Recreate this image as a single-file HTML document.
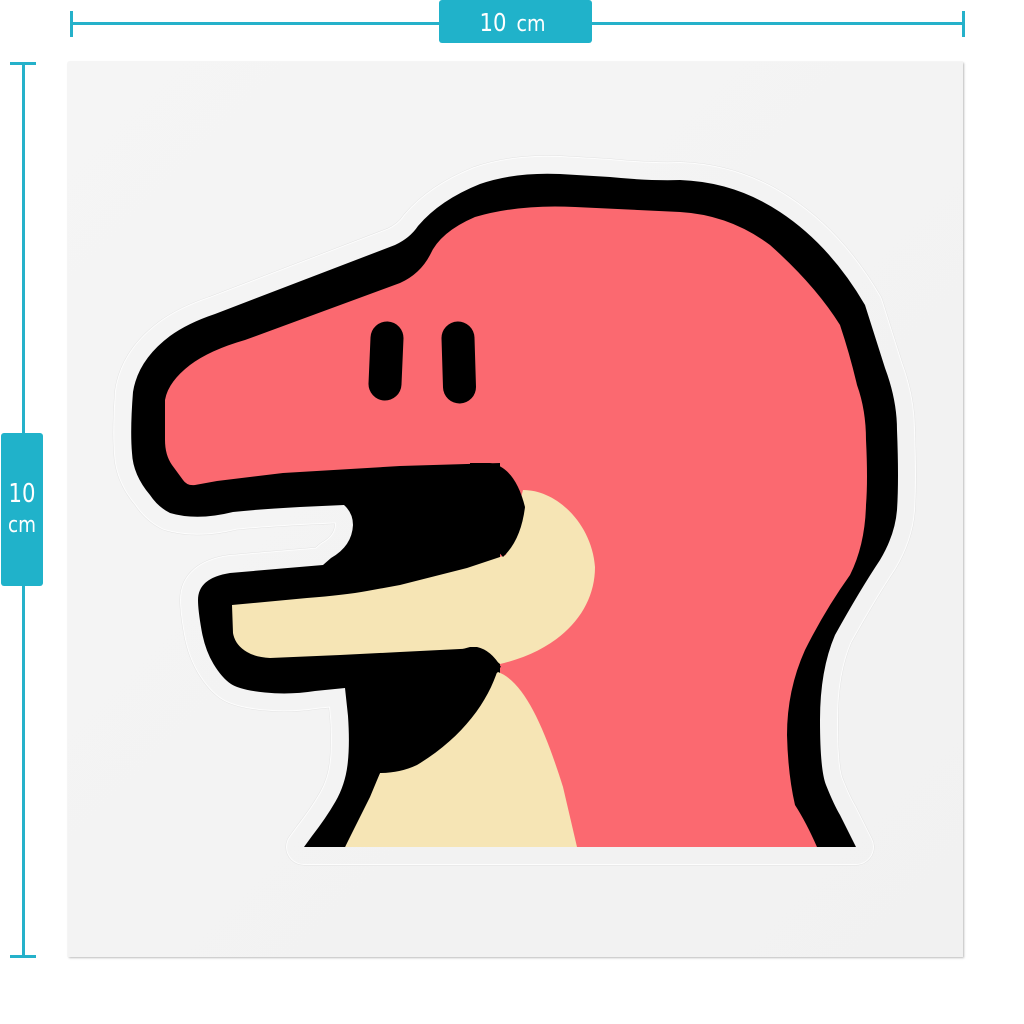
<!DOCTYPE html>
<html>
<head>
<meta charset="utf-8">
<style>
html,body{margin:0;padding:0;background:#fff;width:1024px;height:1024px;overflow:hidden}
svg{display:block;position:absolute;left:0;top:0}
#paper{position:absolute;left:68px;top:62px;width:895px;height:895px;background:#f3f3f3;box-shadow:1px 1px 2px #bdbdbd,0 0 1px #e4e4e4}
</style>
</head>
<body>
<div id="paper"></div>
<svg width="1024" height="1024" viewBox="0 0 1024 1024" xmlns="http://www.w3.org/2000/svg">
<defs>
<linearGradient id="g" gradientUnits="userSpaceOnUse" x1="68" y1="62" x2="963" y2="957">
<stop offset="0" stop-color="#f5f5f5"/>
<stop offset="1" stop-color="#f1f1f1"/>
</linearGradient>
<path id="sil" d="M304 847 L312 836 Q326 818 335.500 801.500 Q345 785 347.500 765 Q350 745 348 716 L345 688 L315 691 Q290 695 265 692.500 Q240 690 231 684 Q222 678 213.500 664 Q205 650 201.500 630 Q198 610 198 600 Q198 578 230 573 L323 565 L331 558 Q352 546 353 525 Q353 513 344 505 L300 507 Q262 509 233 512 Q197 521 170 513 Q158 507 150 495 Q133 475 132 453 Q130 430 133 392 Q138 360 170 336 Q188 323 215 314 L395 245 Q410 238 418 226 Q440 200 480 184 Q515 172 560 174 L610 177 Q650 181 680 180 Q735 182 780 212 Q830 245 865 305 L885 368 Q897 400 897 430 Q899 480 897 510 Q895 535 880 560 Q860 590 835 635 Q820 670 820 720 Q820 770 826 785 Q834 805 840 815 L856 847 Z"/>
</defs>
<rect x="68" y="62" width="895" height="895" fill="url(#g)"/>
<use href="#sil" fill="none" stroke="#e2e2e2" stroke-width="37" stroke-linejoin="round"/>
<use href="#sil" fill="none" stroke="#fdfdfd" stroke-width="36" stroke-linejoin="round"/>
<use href="#sil" fill="url(#g)" stroke="url(#g)" stroke-width="34" stroke-linejoin="round"/>
<use href="#sil" fill="#000"/>

<path fill="#fb6970" d="M165 400 Q168 382 190 365 Q210 350 245 340 L400 283 Q420 274 430 255 Q440 232 475 217 Q520 204 575 207 L680 212 Q730 215 770 245 Q815 285 840 325 Q850 355 857 385 Q866 410 866 440 Q868 480 866 505 Q865 545 850 575 Q825 610 805 650 Q787 690 787 735 Q788 775 795 805 Q806 822 817 847 L500 847 L500 463 L400 466 L283 473 L217 481 L195 485 Q187 486 183 480 L172 465 Q165 455 165 440 Z"/>

<path fill="#f6e5b5" d="M345 847 L380 773 L498 672 C525 682 545 730 563 787 L577 847 Z"/>
<path fill="#f6e5b5" d="M232 605 L307 598 Q345 595 367 591 L400 585 L467 568 L506 555 L523 490 C558 490 592 525 595 567 C595 612 560 650 500 664 L480 648 L400 652 L340 655 L270 658 Q255 657 247 652 Q235 645 233 633 Z"/>

<path fill="#000" d="M470 463 L490 463 Q515 467 525 507 Q521 540 503 557 L470 520 Z"/>
<path fill="#000" d="M470 647 L477 647 Q491 650 501 667 L498 669 C488 702 462 738 417 765 Q400 773 380 773 L370 797 L345 847 L340 847 L350 780 L350 680 Z"/>

<path d="M387 338 L385 384" stroke="#000" stroke-width="33" stroke-linecap="round" fill="none"/>
<path d="M458 338 L459.500 387" stroke="#000" stroke-width="33" stroke-linecap="round" fill="none"/>

<g fill="#25b1ca">
<rect x="71" y="22" width="893" height="3"/>
<rect x="70" y="11" width="3" height="26"/>
<rect x="962" y="11" width="3" height="26"/>
<rect x="22" y="63" width="3" height="893"/>
<rect x="10" y="62" width="26" height="3"/>
<rect x="10" y="955" width="26" height="3"/>
<rect x="439" y="0" width="153" height="43" rx="3" fill="#20b2ca"/>
<rect x="1" y="433" width="42" height="153" rx="3" fill="#20b2ca"/>
</g>
<g fill="#fff" font-family="'DejaVu Sans','Liberation Sans',sans-serif" text-anchor="middle">
<text x="493" y="31" font-size="25" textLength="27" lengthAdjust="spacingAndGlyphs">10</text>
<text x="531" y="31" font-size="22" textLength="29" lengthAdjust="spacingAndGlyphs">cm</text>
<text x="22" y="502" font-size="26" textLength="27" lengthAdjust="spacingAndGlyphs">10</text>
<text x="22" y="532" font-size="22" textLength="28" lengthAdjust="spacingAndGlyphs">cm</text>
</g>
</svg>
</body>
</html>
